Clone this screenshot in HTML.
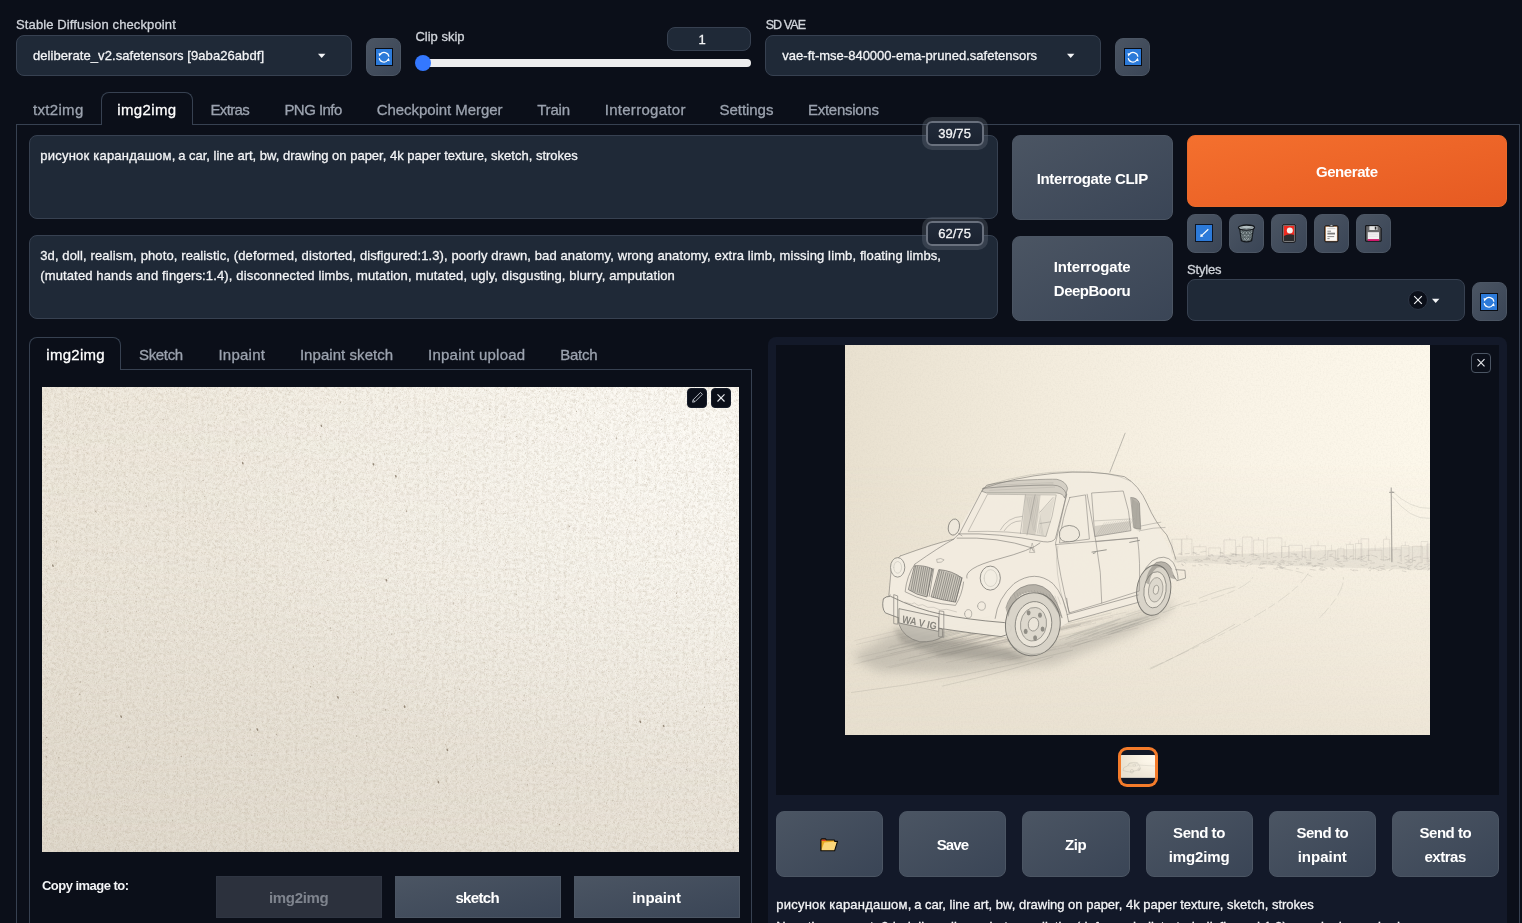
<!DOCTYPE html>
<html lang="en">
<head>
<meta charset="utf-8">
<title>Stable Diffusion</title>
<style>
html,body{margin:0;padding:0;background:#0b0f19;}
html{width:1522px;height:923px;overflow:hidden;}
body{width:1522px;height:923px;overflow:hidden;position:relative;font-family:"Liberation Sans","DejaVu Sans",sans-serif;color:#f3f4f6;}
.a{position:absolute;box-sizing:border-box;}
.t{position:absolute;white-space:nowrap;line-height:20px;height:20px;-webkit-text-stroke:0.3px;}
.tx{position:absolute;left:0;top:0;width:1522px;height:923px;overflow:hidden;will-change:transform;}
.inp{background:#1f2937;border:1px solid #374151;border-radius:8px;}
.btn{background:linear-gradient(to bottom right,#4b5563,#3a4556);border:1px solid #4b5563;border-radius:8px;}
.sq{border-radius:0;}
svg{position:absolute;display:block;overflow:visible;}
</style>
</head>
<body>
<!-- ===== top row ===== -->
<div class="a inp" style="left:16px;top:35px;width:336px;height:41px;"></div>
<svg style="left:317px;top:53px" width="10" height="6" viewBox="0 0 10 6"><path d="M1 0.7h7.4L4.7 4.9z" fill="#f3f4f6"/></svg>
<div class="a btn" style="left:366px;top:38px;width:35px;height:38px;"></div>
<svg style="left:374.5px;top:48px" width="18" height="18" viewBox="0 0 18 18"><rect x="0.5" y="0.5" width="17" height="17" fill="#2c7ad9" stroke="#0a0d14" stroke-width="1"/><path d="M13.9 8.7A4.8 4.8 0 0 0 5.2 6.5M4.2 10.1A4.8 4.8 0 0 0 12.9 12" stroke="#fff" stroke-width="1.15" fill="none"/><path d="M3.5 5.3l3.4 0.2-2.5 3.1zM14.7 13.2l-3.3-0.4 2.4-3z" fill="#fff"/></svg>

<div class="a inp" style="left:667px;top:27px;width:84px;height:24px;"></div>
<div class="a" style="left:415.5px;top:59.2px;width:335px;height:8px;border-radius:4px;background:#ededee;"></div>
<div class="a" style="left:415.3px;top:55.1px;width:15.6px;height:15.6px;border-radius:8px;background:#3478ff;"></div>
<div class="a inp" style="left:765px;top:35px;width:336px;height:41px;"></div>
<svg style="left:1066px;top:53px" width="10" height="6" viewBox="0 0 10 6"><path d="M1 0.7h7.4L4.7 4.9z" fill="#f3f4f6"/></svg>
<div class="a btn" style="left:1115px;top:38px;width:35px;height:38px;"></div>
<svg style="left:1124px;top:48px" width="18" height="18" viewBox="0 0 18 18"><rect x="0.5" y="0.5" width="17" height="17" fill="#2c7ad9" stroke="#0a0d14" stroke-width="1"/><path d="M13.9 8.7A4.8 4.8 0 0 0 5.2 6.5M4.2 10.1A4.8 4.8 0 0 0 12.9 12" stroke="#fff" stroke-width="1.15" fill="none"/><path d="M3.5 5.3l3.4 0.2-2.5 3.1zM14.7 13.2l-3.3-0.4 2.4-3z" fill="#fff"/></svg>


<!-- ===== main tabs ===== -->
<div class="a" style="left:16px;top:124px;width:1504px;height:799px;border:1px solid #374151;border-bottom:none;"></div>
<div class="a" style="left:101px;top:92px;width:92px;height:33px;border:1px solid #374151;border-bottom:none;border-radius:8px 8px 0 0;background:#0b0f19;"></div>

<!-- ===== prompts ===== -->
<div class="a inp" style="left:29px;top:135px;width:969px;height:84px;"></div>
<div class="a inp" style="left:29px;top:235px;width:969px;height:84px;"></div>
<div class="a" style="left:926px;top:121px;width:58px;height:25px;border:2px solid #69707d;border-radius:6px;background:linear-gradient(#212a39,#1b2331);box-shadow:0 0 0 4px rgba(107,114,128,0.32);"></div>
<div class="a" style="left:926px;top:221px;width:58px;height:25px;border:2px solid #69707d;border-radius:6px;background:linear-gradient(#212a39,#1b2331);box-shadow:0 0 0 4px rgba(107,114,128,0.32);"></div>

<div class="a btn" style="left:1012px;top:135px;width:161px;height:85px;"></div>
<div class="a btn" style="left:1012px;top:236px;width:161px;height:85px;"></div>
<div class="a" style="left:1187px;top:135px;width:320px;height:72px;border-radius:8px;background:linear-gradient(to bottom right,#f4702e,#e65a22);border:1px solid #ea6a2a;"></div>

<div class="a btn" style="left:1187px;top:214px;width:35px;height:39px;"></div>
<div class="a btn" style="left:1229px;top:214px;width:35px;height:39px;"></div>
<div class="a btn" style="left:1271px;top:214px;width:36px;height:39px;"></div>
<div class="a btn" style="left:1314px;top:214px;width:35px;height:39px;"></div>
<div class="a btn" style="left:1356px;top:214px;width:35px;height:39px;"></div>
<svg style="left:1195px;top:224px" width="18" height="18" viewBox="0 0 18 18"><rect x="0.5" y="0.5" width="17" height="17" fill="#2c7ad9" stroke="#0d1626" stroke-width="1"/><path d="M13.3 5.2L6.6 11.6" stroke="#fff" stroke-width="1.2" fill="none"/><path d="M5.2 12.9l0.6-3.2 2.6 2.7z" fill="#fff"/></svg>
<svg style="left:1237px;top:224px" width="19" height="19" viewBox="0 0 19 19"><path d="M2.6 3.6L4.4 16.6Q9.5 19 14.6 16.6L16.4 3.6z" fill="#96a1a4" stroke="#14181d" stroke-width="1.3" stroke-linejoin="round"/><path d="M3.4 7.2l12.2 0M3.8 10.2l11.4 0M4.2 13.2l10.6 0M5 6l9 10M8 5.6l6.6 7.6M11 5.6l4 4.6M3.6 8.4l7 8.6M4.2 12.2l4 5M14 6l-9 10M11 5.6l-6.6 7.6M8 5.6l-4 4.6M15.4 8.4l-7 8.6M14.8 12.2l-4 5" stroke="#4f5a5e" stroke-width="0.9" fill="none"/><ellipse cx="9.5" cy="3.6" rx="8" ry="2.6" fill="#b4bfc2" stroke="#14181d" stroke-width="1.3"/><path d="M3.5 3.8Q9.5 6 15.5 3.8" stroke="#6d787c" stroke-width="0.8" fill="none"/></svg>
<svg style="left:1282px;top:224px" width="14" height="19" viewBox="0 0 14 19"><rect x="0.6" y="0.6" width="12.8" height="17.6" rx="1.6" fill="#2b2b2d" stroke="#111113" stroke-width="1"/><path d="M1.7 1.7h10.6v9.3Q7 9.3 1.7 11.9z" fill="#ef2a20"/><circle cx="7.8" cy="6.4" r="3" fill="#f4f2ee"/><rect x="1.3" y="1.3" width="11.4" height="16.2" rx="1.1" fill="none" stroke="#a3a3a3" stroke-width="0.7"/></svg>
<svg style="left:1324px;top:224px" width="15" height="19" viewBox="0 0 15 19"><rect x="0.8" y="1.8" width="13.2" height="16" rx="1" fill="#c99160" stroke="#111113" stroke-width="1"/><rect x="1.9" y="2.9" width="11" height="13.9" fill="#fbfaf8"/><path d="M5.4 2.6Q5.6 0.8 7.4 0.5Q9.2 0.8 9.4 2.6z" fill="#b8bcc0" stroke="#33373b" stroke-width="0.6"/><path d="M3.4 4.6h8" stroke="#c9c9c9" stroke-width="0.9"/><path d="M3.4 7.2h3.6M3.4 12.6h6.8M3.4 14.6h2.2" stroke="#7c7c7c" stroke-width="0.9"/><path d="M3.4 9.6h7.6" stroke="#7c7c7c" stroke-width="1.8"/></svg>
<svg style="left:1365px;top:225px" width="17" height="17" viewBox="0 0 17 17"><path d="M0.7 0.7h12.8l2.6 2.6v12.9H0.7z" fill="#68686a" stroke="#0b0b0d" stroke-width="1" stroke-linejoin="round"/><rect x="4.4" y="1.2" width="8" height="3.8" fill="#e6e6e6"/><rect x="9.8" y="1.6" width="1.6" height="3" fill="#2a2a2c"/><rect x="2.8" y="7.2" width="11.2" height="7.2" fill="#f3f2f3"/><path d="M3.4 9.2h10M3.4 11.2h10" stroke="#dddadd" stroke-width="0.6"/><rect x="2.8" y="14.2" width="11.2" height="1.7" fill="#df1270"/></svg>


<div class="a inp" style="left:1187px;top:279px;width:278px;height:42px;"></div>
<div class="a" style="left:1408px;top:290px;width:20px;height:20px;border-radius:10px;background:#0b0f19;border:1px solid #2b3444;"></div>
<svg style="left:1413px;top:295px" width="10" height="10" viewBox="0 0 10 10"><path d="M1.2 1.2L8.8 8.8M8.8 1.2L1.2 8.8" stroke="#f3f4f6" stroke-width="1.15" fill="none"/></svg>
<svg style="left:1431.2px;top:298px" width="10" height="6" viewBox="0 0 10 6"><path d="M1 0.7h7.4L4.7 4.9z" fill="#f3f4f6"/></svg>
<div class="a btn" style="left:1472px;top:282px;width:35px;height:39px;"></div>
<svg style="left:1480px;top:293px" width="18" height="18" viewBox="0 0 18 18"><rect x="0.5" y="0.5" width="17" height="17" fill="#2c7ad9" stroke="#0a0d14" stroke-width="1"/><path d="M13.9 8.7A4.8 4.8 0 0 0 5.2 6.5M4.2 10.1A4.8 4.8 0 0 0 12.9 12" stroke="#fff" stroke-width="1.15" fill="none"/><path d="M3.5 5.3l3.4 0.2-2.5 3.1zM14.7 13.2l-3.3-0.4 2.4-3z" fill="#fff"/></svg>


<!-- ===== left panel ===== -->
<div class="a" style="left:29px;top:369px;width:723px;height:554px;border:1px solid #374151;border-bottom:none;"></div>
<div class="a" style="left:29px;top:337px;width:92px;height:33px;border:1px solid #374151;border-bottom:none;border-radius:8px 8px 0 0;background:#0b0f19;"></div>
<svg style="left:42px;top:387px" width="697" height="465" viewBox="0 0 697 465">
<defs>
<linearGradient id="pgt" x1="0" y1="0" x2="1" y2="0"><stop offset="0" stop-color="#efe9dd"/><stop offset="1" stop-color="#f9f6ee"/></linearGradient>
<linearGradient id="pgb" x1="0" y1="0" x2="1" y2="0"><stop offset="0" stop-color="#dfd8cb"/><stop offset="1" stop-color="#e9e3d8"/></linearGradient>
<linearGradient id="pgm" x1="0" y1="0" x2="0" y2="1"><stop offset="0" stop-color="#000"/><stop offset="0.4" stop-color="#333"/><stop offset="0.75" stop-color="#bbb"/><stop offset="1" stop-color="#fff"/></linearGradient>
<radialGradient id="phl" cx="0.95" cy="0.1" r="0.75"><stop offset="0" stop-color="#fffdf8" stop-opacity="0.75"/><stop offset="0.5" stop-color="#fffdf8" stop-opacity="0.3"/><stop offset="1" stop-color="#fffdf8" stop-opacity="0"/></radialGradient>
<mask id="pmk"><rect width="697" height="465" fill="url(#pgm)"/></mask>
<filter id="pn" x="0" y="0" width="100%" height="100%"><feTurbulence type="fractalNoise" baseFrequency="0.32" numOctaves="3" seed="3"/><feColorMatrix type="matrix" values="0 0 0 0 0.42  0 0 0 0 0.35  0 0 0 0 0.26  0.7 0.7 0.7 0 -0.92"/></filter>
<filter id="pf" x="0" y="0" width="100%" height="100%"><feTurbulence type="fractalNoise" baseFrequency="0.9" numOctaves="1" seed="21"/><feColorMatrix type="matrix" values="0 0 0 0 0.40  0 0 0 0 0.33  0 0 0 0 0.24  1.1 1.1 1.1 0 -1.68"/></filter>
<filter id="pl" x="0" y="0" width="100%" height="100%"><feTurbulence type="fractalNoise" baseFrequency="0.45" numOctaves="2" seed="9"/><feColorMatrix type="matrix" values="0 0 0 0 1  0 0 0 0 1  0 0 0 0 0.98  0.7 0.7 0.7 0 -0.95"/></filter>
</defs>
<rect width="697" height="465" fill="url(#pgt)"/>
<rect width="697" height="465" fill="url(#pgb)" mask="url(#pmk)"/>
<rect width="697" height="465" fill="url(#phl)"/>
<rect width="697" height="465" filter="url(#pn)" opacity="0.42"/>
<rect width="697" height="465" filter="url(#pf)" opacity="0.5"/>
<rect width="697" height="465" filter="url(#pl)" opacity="0.22"/>
<ellipse cx="226.4" cy="71.5" rx="0.7" ry="1.02" fill="#6b5a45" opacity="0.16"/><ellipse cx="67.2" cy="270.7" rx="0.6" ry="0.52" fill="#6b5a45" opacity="0.21"/><ellipse cx="291.8" cy="112.9" rx="0.6" ry="0.88" fill="#6b5a45" opacity="0.26"/><ellipse cx="87.8" cy="104.9" rx="0.7" ry="0.59" fill="#6b5a45" opacity="0.31"/><ellipse cx="407.8" cy="24.9" rx="0.45" ry="0.67" fill="#6b5a45" opacity="0.16"/><ellipse cx="202.7" cy="68.5" rx="0.4" ry="0.50" fill="#6b5a45" opacity="0.30"/><ellipse cx="474.6" cy="49.5" rx="0.6" ry="0.66" fill="#6b5a45" opacity="0.32"/><ellipse cx="381.6" cy="30.9" rx="0.4" ry="0.48" fill="#6b5a45" opacity="0.32"/><ellipse cx="370.5" cy="360.3" rx="0.55" ry="0.64" fill="#6b5a45" opacity="0.31"/><ellipse cx="209.7" cy="368.2" rx="0.7" ry="0.61" fill="#6b5a45" opacity="0.36"/><ellipse cx="210.1" cy="230.2" rx="0.5" ry="0.52" fill="#6b5a45" opacity="0.35"/><ellipse cx="681.3" cy="56.4" rx="0.55" ry="0.59" fill="#6b5a45" opacity="0.19"/><ellipse cx="648.8" cy="196.4" rx="0.7" ry="0.87" fill="#6b5a45" opacity="0.17"/><ellipse cx="548.8" cy="379.3" rx="0.5" ry="0.64" fill="#6b5a45" opacity="0.34"/><ellipse cx="403.9" cy="212.3" rx="0.4" ry="0.47" fill="#6b5a45" opacity="0.41"/><ellipse cx="462.3" cy="30.0" rx="0.7" ry="0.88" fill="#6b5a45" opacity="0.23"/><ellipse cx="474.1" cy="207.4" rx="0.7" ry="0.93" fill="#6b5a45" opacity="0.25"/><ellipse cx="17.6" cy="214.8" rx="0.45" ry="0.54" fill="#6b5a45" opacity="0.31"/><ellipse cx="153.2" cy="134.5" rx="0.7" ry="0.78" fill="#6b5a45" opacity="0.22"/><ellipse cx="605.9" cy="39.1" rx="0.55" ry="0.56" fill="#6b5a45" opacity="0.26"/><ellipse cx="96.9" cy="200.5" rx="0.6" ry="0.68" fill="#6b5a45" opacity="0.23"/><ellipse cx="250.6" cy="409.6" rx="0.45" ry="0.42" fill="#6b5a45" opacity="0.19"/><ellipse cx="162.7" cy="109.6" rx="0.55" ry="0.52" fill="#6b5a45" opacity="0.37"/><ellipse cx="197.4" cy="69.2" rx="0.6" ry="0.75" fill="#6b5a45" opacity="0.25"/><ellipse cx="662.5" cy="320.3" rx="0.6" ry="0.79" fill="#6b5a45" opacity="0.41"/><ellipse cx="514.7" cy="212.5" rx="0.7" ry="0.78" fill="#6b5a45" opacity="0.37"/><ellipse cx="278.5" cy="49.7" rx="0.7" ry="0.67" fill="#6b5a45" opacity="0.26"/><ellipse cx="684.4" cy="205.1" rx="0.4" ry="0.34" fill="#6b5a45" opacity="0.24"/><ellipse cx="2.2" cy="71.7" rx="0.4" ry="0.52" fill="#6b5a45" opacity="0.41"/><ellipse cx="50.7" cy="97.9" rx="0.55" ry="0.55" fill="#6b5a45" opacity="0.19"/><ellipse cx="242.7" cy="169.9" rx="0.4" ry="0.48" fill="#6b5a45" opacity="0.18"/><ellipse cx="679.6" cy="223.5" rx="0.5" ry="0.44" fill="#6b5a45" opacity="0.17"/><ellipse cx="239.4" cy="124.1" rx="0.7" ry="0.57" fill="#6b5a45" opacity="0.19"/><ellipse cx="661.0" cy="245.5" rx="0.45" ry="0.69" fill="#6b5a45" opacity="0.34"/><ellipse cx="527.4" cy="139.4" rx="0.7" ry="0.95" fill="#6b5a45" opacity="0.38"/><ellipse cx="183.0" cy="171.0" rx="0.45" ry="0.44" fill="#6b5a45" opacity="0.25"/><ellipse cx="377.3" cy="233.7" rx="0.7" ry="1.01" fill="#6b5a45" opacity="0.21"/><ellipse cx="684.6" cy="395.1" rx="0.45" ry="0.63" fill="#6b5a45" opacity="0.37"/><ellipse cx="159.1" cy="240.6" rx="0.5" ry="0.80" fill="#6b5a45" opacity="0.35"/><ellipse cx="549.5" cy="219.7" rx="0.45" ry="0.70" fill="#6b5a45" opacity="0.34"/><ellipse cx="311.9" cy="434.0" rx="0.5" ry="0.55" fill="#6b5a45" opacity="0.41"/><ellipse cx="154.8" cy="106.6" rx="0.45" ry="0.53" fill="#6b5a45" opacity="0.24"/><ellipse cx="684.8" cy="283.3" rx="0.4" ry="0.53" fill="#6b5a45" opacity="0.28"/><ellipse cx="556.2" cy="41.1" rx="0.7" ry="0.78" fill="#6b5a45" opacity="0.18"/><ellipse cx="495.1" cy="93.9" rx="0.45" ry="0.59" fill="#6b5a45" opacity="0.27"/><ellipse cx="62.1" cy="438.2" rx="0.7" ry="0.78" fill="#6b5a45" opacity="0.26"/><ellipse cx="658.1" cy="336.1" rx="0.45" ry="0.37" fill="#6b5a45" opacity="0.42"/><ellipse cx="411.4" cy="216.5" rx="0.7" ry="1.02" fill="#6b5a45" opacity="0.19"/><ellipse cx="681.4" cy="305.0" rx="0.5" ry="0.62" fill="#6b5a45" opacity="0.19"/><ellipse cx="16.8" cy="370.5" rx="0.7" ry="0.85" fill="#6b5a45" opacity="0.33"/><ellipse cx="649.0" cy="202.0" rx="0.45" ry="0.44" fill="#6b5a45" opacity="0.37"/><ellipse cx="176.5" cy="137.1" rx="0.45" ry="0.48" fill="#6b5a45" opacity="0.36"/><ellipse cx="379.2" cy="386.6" rx="0.4" ry="0.43" fill="#6b5a45" opacity="0.40"/><ellipse cx="319.5" cy="270.9" rx="0.6" ry="0.92" fill="#6b5a45" opacity="0.26"/><ellipse cx="349.6" cy="247.2" rx="0.6" ry="0.90" fill="#6b5a45" opacity="0.29"/><ellipse cx="540.1" cy="282.5" rx="0.45" ry="0.53" fill="#6b5a45" opacity="0.20"/><ellipse cx="504.6" cy="258.5" rx="0.5" ry="0.61" fill="#6b5a45" opacity="0.33"/><ellipse cx="336.4" cy="360.0" rx="0.6" ry="0.57" fill="#6b5a45" opacity="0.17"/><ellipse cx="31.2" cy="47.1" rx="0.55" ry="0.77" fill="#6b5a45" opacity="0.30"/><ellipse cx="634.4" cy="206.3" rx="0.6" ry="0.77" fill="#6b5a45" opacity="0.41"/><ellipse cx="140.2" cy="129.8" rx="0.6" ry="0.71" fill="#6b5a45" opacity="0.29"/><ellipse cx="654.5" cy="324.3" rx="0.5" ry="0.76" fill="#6b5a45" opacity="0.40"/><ellipse cx="142.4" cy="208.3" rx="0.55" ry="0.63" fill="#6b5a45" opacity="0.18"/><ellipse cx="52.3" cy="112.9" rx="0.4" ry="0.42" fill="#6b5a45" opacity="0.21"/><ellipse cx="86.8" cy="360.2" rx="0.7" ry="0.77" fill="#6b5a45" opacity="0.32"/><ellipse cx="177.4" cy="65.3" rx="0.55" ry="0.86" fill="#6b5a45" opacity="0.21"/><ellipse cx="278.0" cy="226.6" rx="0.7" ry="0.65" fill="#6b5a45" opacity="0.37"/><ellipse cx="301.0" cy="239.7" rx="0.5" ry="0.54" fill="#6b5a45" opacity="0.26"/><ellipse cx="65.9" cy="170.7" rx="0.5" ry="0.58" fill="#6b5a45" opacity="0.30"/><ellipse cx="14.5" cy="154.8" rx="0.6" ry="0.94" fill="#6b5a45" opacity="0.23"/><ellipse cx="80.2" cy="425.5" rx="0.45" ry="0.40" fill="#6b5a45" opacity="0.41"/><ellipse cx="186.0" cy="20.3" rx="0.45" ry="0.41" fill="#6b5a45" opacity="0.22"/><ellipse cx="294.6" cy="422.2" rx="0.5" ry="0.61" fill="#6b5a45" opacity="0.26"/><ellipse cx="358.7" cy="230.0" rx="0.5" ry="0.42" fill="#6b5a45" opacity="0.17"/><ellipse cx="478.9" cy="198.1" rx="0.4" ry="0.33" fill="#6b5a45" opacity="0.22"/><ellipse cx="63.4" cy="122.1" rx="0.6" ry="0.51" fill="#6b5a45" opacity="0.38"/><ellipse cx="599.9" cy="211.2" rx="0.5" ry="0.57" fill="#6b5a45" opacity="0.42"/><ellipse cx="636.4" cy="288.6" rx="0.4" ry="0.40" fill="#6b5a45" opacity="0.29"/><ellipse cx="77.8" cy="76.4" rx="0.4" ry="0.62" fill="#6b5a45" opacity="0.20"/><ellipse cx="437.7" cy="246.8" rx="0.45" ry="0.54" fill="#6b5a45" opacity="0.23"/><ellipse cx="125.3" cy="162.0" rx="0.4" ry="0.33" fill="#6b5a45" opacity="0.42"/><ellipse cx="14.8" cy="235.1" rx="0.45" ry="0.45" fill="#6b5a45" opacity="0.29"/><ellipse cx="311.8" cy="305.5" rx="0.7" ry="0.84" fill="#6b5a45" opacity="0.27"/><ellipse cx="580.4" cy="183.2" rx="0.6" ry="0.58" fill="#6b5a45" opacity="0.23"/><ellipse cx="161.1" cy="93.6" rx="0.7" ry="0.64" fill="#6b5a45" opacity="0.35"/><ellipse cx="687.7" cy="454.6" rx="0.45" ry="0.59" fill="#6b5a45" opacity="0.15"/><ellipse cx="611.7" cy="200.6" rx="0.4" ry="0.59" fill="#6b5a45" opacity="0.17"/><ellipse cx="605.3" cy="311.1" rx="0.5" ry="0.68" fill="#6b5a45" opacity="0.31"/><ellipse cx="33.3" cy="87.4" rx="0.5" ry="0.51" fill="#6b5a45" opacity="0.27"/><ellipse cx="668.5" cy="450.4" rx="0.6" ry="0.50" fill="#6b5a45" opacity="0.24"/><ellipse cx="613.5" cy="102.4" rx="0.45" ry="0.50" fill="#6b5a45" opacity="0.15"/><ellipse cx="330.9" cy="233.8" rx="0.45" ry="0.64" fill="#6b5a45" opacity="0.22"/><ellipse cx="65.0" cy="378.7" rx="0.45" ry="0.38" fill="#6b5a45" opacity="0.26"/><ellipse cx="17.6" cy="142.3" rx="0.45" ry="0.70" fill="#6b5a45" opacity="0.17"/><ellipse cx="593.3" cy="73.6" rx="0.7" ry="0.89" fill="#6b5a45" opacity="0.36"/><ellipse cx="531.7" cy="334.2" rx="0.55" ry="0.76" fill="#6b5a45" opacity="0.19"/><ellipse cx="447.8" cy="22.2" rx="0.7" ry="0.91" fill="#6b5a45" opacity="0.39"/><ellipse cx="510.6" cy="376.4" rx="0.45" ry="0.63" fill="#6b5a45" opacity="0.40"/><ellipse cx="396.0" cy="376.7" rx="0.4" ry="0.51" fill="#6b5a45" opacity="0.37"/><ellipse cx="620.7" cy="316.8" rx="0.7" ry="0.61" fill="#6b5a45" opacity="0.32"/><ellipse cx="31.0" cy="295.7" rx="0.4" ry="0.46" fill="#6b5a45" opacity="0.25"/><ellipse cx="37.2" cy="10.7" rx="0.6" ry="0.71" fill="#6b5a45" opacity="0.33"/><ellipse cx="4.3" cy="369.7" rx="0.7" ry="1.06" fill="#6b5a45" opacity="0.40"/><ellipse cx="65.7" cy="244.5" rx="0.7" ry="0.70" fill="#6b5a45" opacity="0.35"/><ellipse cx="53.6" cy="124.4" rx="0.7" ry="0.69" fill="#6b5a45" opacity="0.35"/><ellipse cx="452.4" cy="214.2" rx="0.55" ry="0.84" fill="#6b5a45" opacity="0.17"/><ellipse cx="201.1" cy="23.6" rx="0.7" ry="0.60" fill="#6b5a45" opacity="0.32"/><ellipse cx="104.2" cy="119.1" rx="0.7" ry="0.91" fill="#6b5a45" opacity="0.34"/><ellipse cx="94.5" cy="224.4" rx="0.55" ry="0.74" fill="#6b5a45" opacity="0.22"/><ellipse cx="481.7" cy="313.5" rx="0.5" ry="0.51" fill="#6b5a45" opacity="0.34"/><ellipse cx="324.9" cy="355.7" rx="0.6" ry="0.95" fill="#6b5a45" opacity="0.20"/><ellipse cx="650.8" cy="10.1" rx="0.55" ry="0.66" fill="#6b5a45" opacity="0.17"/><ellipse cx="691.3" cy="460.2" rx="0.55" ry="0.86" fill="#6b5a45" opacity="0.21"/><ellipse cx="148.0" cy="270.1" rx="0.45" ry="0.45" fill="#6b5a45" opacity="0.35"/><ellipse cx="251.2" cy="280.2" rx="0.7" ry="1.06" fill="#6b5a45" opacity="0.29"/><ellipse cx="489.4" cy="108.7" rx="0.55" ry="0.51" fill="#6b5a45" opacity="0.26"/><ellipse cx="660.3" cy="316.2" rx="0.55" ry="0.50" fill="#6b5a45" opacity="0.23"/><ellipse cx="240.4" cy="147.7" rx="0.5" ry="0.70" fill="#6b5a45" opacity="0.15"/><ellipse cx="583.5" cy="57.3" rx="0.45" ry="0.68" fill="#6b5a45" opacity="0.34"/><ellipse cx="202.9" cy="173.6" rx="0.55" ry="0.82" fill="#6b5a45" opacity="0.26"/><ellipse cx="54.9" cy="428.6" rx="0.5" ry="0.51" fill="#6b5a45" opacity="0.38"/><ellipse cx="37.8" cy="307.2" rx="0.7" ry="0.70" fill="#6b5a45" opacity="0.40"/><ellipse cx="186.1" cy="237.6" rx="0.45" ry="0.64" fill="#6b5a45" opacity="0.36"/><ellipse cx="298.4" cy="15.4" rx="0.7" ry="1.05" fill="#6b5a45" opacity="0.26"/><ellipse cx="386.0" cy="95.8" rx="0.4" ry="0.55" fill="#6b5a45" opacity="0.16"/><ellipse cx="314.4" cy="349.0" rx="0.7" ry="0.83" fill="#6b5a45" opacity="0.38"/><ellipse cx="634.0" cy="255.6" rx="0.45" ry="0.48" fill="#6b5a45" opacity="0.28"/><ellipse cx="208.4" cy="342.7" rx="0.7" ry="0.93" fill="#6b5a45" opacity="0.22"/><ellipse cx="210.5" cy="258.9" rx="0.55" ry="0.72" fill="#6b5a45" opacity="0.18"/><ellipse cx="54.1" cy="232.8" rx="0.55" ry="0.64" fill="#6b5a45" opacity="0.30"/><ellipse cx="232.7" cy="352.0" rx="0.55" ry="0.52" fill="#6b5a45" opacity="0.19"/><ellipse cx="64.9" cy="159.6" rx="0.4" ry="0.44" fill="#6b5a45" opacity="0.24"/><ellipse cx="562.9" cy="95.2" rx="0.4" ry="0.45" fill="#6b5a45" opacity="0.35"/><ellipse cx="288.8" cy="243.6" rx="0.55" ry="0.77" fill="#6b5a45" opacity="0.22"/><ellipse cx="347.2" cy="266.7" rx="0.5" ry="0.60" fill="#6b5a45" opacity="0.18"/><ellipse cx="438.3" cy="399.8" rx="0.45" ry="0.68" fill="#6b5a45" opacity="0.18"/><ellipse cx="268.5" cy="299.7" rx="0.55" ry="0.81" fill="#6b5a45" opacity="0.41"/><ellipse cx="606.9" cy="12.1" rx="0.4" ry="0.56" fill="#6b5a45" opacity="0.26"/><ellipse cx="559.3" cy="448.4" rx="0.55" ry="0.61" fill="#6b5a45" opacity="0.15"/><ellipse cx="644.3" cy="382.6" rx="0.55" ry="0.55" fill="#6b5a45" opacity="0.41"/><ellipse cx="77.6" cy="73.2" rx="0.6" ry="0.53" fill="#6b5a45" opacity="0.41"/><ellipse cx="574.0" cy="325.2" rx="0.55" ry="0.78" fill="#6b5a45" opacity="0.17"/><ellipse cx="2.9" cy="59.9" rx="0.6" ry="0.79" fill="#6b5a45" opacity="0.40"/><ellipse cx="212.5" cy="61.0" rx="0.5" ry="0.57" fill="#6b5a45" opacity="0.29"/><ellipse cx="531.3" cy="47.8" rx="0.5" ry="0.63" fill="#6b5a45" opacity="0.29"/><ellipse cx="270.9" cy="105.1" rx="0.6" ry="0.74" fill="#6b5a45" opacity="0.15"/><ellipse cx="692.5" cy="130.4" rx="0.5" ry="0.75" fill="#6b5a45" opacity="0.32"/><ellipse cx="331.4" cy="110.2" rx="0.45" ry="0.51" fill="#6b5a45" opacity="0.16"/><ellipse cx="452.2" cy="27.5" rx="0.45" ry="0.60" fill="#6b5a45" opacity="0.28"/><ellipse cx="293.1" cy="120.6" rx="0.7" ry="0.77" fill="#6b5a45" opacity="0.26"/><ellipse cx="343.6" cy="322.8" rx="0.7" ry="0.94" fill="#6b5a45" opacity="0.26"/><ellipse cx="139.3" cy="369.4" rx="0.7" ry="0.60" fill="#6b5a45" opacity="0.38"/><ellipse cx="345.5" cy="94.4" rx="0.45" ry="0.44" fill="#6b5a45" opacity="0.21"/><ellipse cx="529.0" cy="138.0" rx="0.6" ry="0.57" fill="#6b5a45" opacity="0.28"/><ellipse cx="156.8" cy="194.3" rx="0.7" ry="0.89" fill="#6b5a45" opacity="0.17"/><ellipse cx="640.9" cy="27.1" rx="0.4" ry="0.37" fill="#6b5a45" opacity="0.41"/><ellipse cx="37.9" cy="29.7" rx="0.55" ry="0.75" fill="#6b5a45" opacity="0.27"/><ellipse cx="219.7" cy="54.2" rx="0.4" ry="0.43" fill="#6b5a45" opacity="0.40"/><ellipse cx="130.6" cy="433.4" rx="0.7" ry="0.73" fill="#6b5a45" opacity="0.28"/><ellipse cx="504.7" cy="388.8" rx="0.5" ry="0.44" fill="#6b5a45" opacity="0.27"/><ellipse cx="56.2" cy="39.2" rx="0.55" ry="0.49" fill="#6b5a45" opacity="0.41"/><ellipse cx="670.2" cy="97.6" rx="0.5" ry="0.52" fill="#6b5a45" opacity="0.36"/><ellipse cx="559.1" cy="42.5" rx="0.7" ry="0.77" fill="#6b5a45" opacity="0.28"/><ellipse cx="639.2" cy="91.0" rx="0.5" ry="0.59" fill="#6b5a45" opacity="0.35"/><ellipse cx="439.7" cy="116.3" rx="0.7" ry="0.58" fill="#6b5a45" opacity="0.36"/><ellipse cx="26.2" cy="30.8" rx="0.4" ry="0.56" fill="#6b5a45" opacity="0.22"/><ellipse cx="624.7" cy="158.3" rx="0.5" ry="0.78" fill="#6b5a45" opacity="0.24"/><ellipse cx="32.2" cy="346.1" rx="0.7" ry="0.71" fill="#6b5a45" opacity="0.24"/><ellipse cx="4.6" cy="350.4" rx="0.7" ry="0.60" fill="#6b5a45" opacity="0.41"/><ellipse cx="574.4" cy="51.4" rx="0.7" ry="1.09" fill="#6b5a45" opacity="0.41"/><ellipse cx="269.9" cy="117.7" rx="0.55" ry="0.50" fill="#6b5a45" opacity="0.37"/><ellipse cx="346.1" cy="6.0" rx="0.7" ry="0.95" fill="#6b5a45" opacity="0.23"/><ellipse cx="106.9" cy="110.9" rx="0.5" ry="0.71" fill="#6b5a45" opacity="0.27"/><ellipse cx="414.8" cy="238.0" rx="0.55" ry="0.55" fill="#6b5a45" opacity="0.35"/><ellipse cx="46.9" cy="17.6" rx="0.6" ry="0.56" fill="#6b5a45" opacity="0.30"/><ellipse cx="297.6" cy="50.5" rx="0.4" ry="0.35" fill="#6b5a45" opacity="0.22"/><ellipse cx="68.8" cy="231.8" rx="0.7" ry="0.66" fill="#6b5a45" opacity="0.41"/><ellipse cx="94.1" cy="214.5" rx="0.7" ry="0.86" fill="#6b5a45" opacity="0.21"/><ellipse cx="538.3" cy="352.2" rx="0.5" ry="0.63" fill="#6b5a45" opacity="0.23"/><ellipse cx="260.5" cy="342.2" rx="0.45" ry="0.43" fill="#6b5a45" opacity="0.27"/><ellipse cx="165.2" cy="131.7" rx="0.6" ry="0.51" fill="#6b5a45" opacity="0.20"/><ellipse cx="176.4" cy="115.4" rx="0.6" ry="0.87" fill="#6b5a45" opacity="0.21"/><ellipse cx="454.8" cy="458.8" rx="0.4" ry="0.60" fill="#6b5a45" opacity="0.15"/><ellipse cx="162.2" cy="208.7" rx="0.5" ry="0.52" fill="#6b5a45" opacity="0.16"/><ellipse cx="84.6" cy="89.4" rx="0.6" ry="0.52" fill="#6b5a45" opacity="0.20"/><ellipse cx="357.3" cy="83.9" rx="0.6" ry="0.85" fill="#6b5a45" opacity="0.22"/><ellipse cx="657.4" cy="50.8" rx="0.6" ry="0.65" fill="#6b5a45" opacity="0.34"/><ellipse cx="28.0" cy="158.7" rx="0.4" ry="0.40" fill="#6b5a45" opacity="0.21"/><ellipse cx="417.4" cy="302.4" rx="0.45" ry="0.65" fill="#6b5a45" opacity="0.37"/><ellipse cx="285.4" cy="173.4" rx="0.6" ry="0.58" fill="#6b5a45" opacity="0.23"/><ellipse cx="553.1" cy="254.6" rx="0.4" ry="0.57" fill="#6b5a45" opacity="0.26"/><ellipse cx="462.2" cy="73.2" rx="0.6" ry="0.56" fill="#6b5a45" opacity="0.17"/><ellipse cx="483.9" cy="190.9" rx="0.5" ry="0.57" fill="#6b5a45" opacity="0.33"/><ellipse cx="37.6" cy="345.6" rx="0.5" ry="0.41" fill="#6b5a45" opacity="0.26"/><ellipse cx="533.3" cy="371.8" rx="0.7" ry="0.97" fill="#6b5a45" opacity="0.20"/><ellipse cx="143.1" cy="4.7" rx="0.45" ry="0.66" fill="#6b5a45" opacity="0.26"/><ellipse cx="283.5" cy="409.0" rx="0.55" ry="0.50" fill="#6b5a45" opacity="0.36"/><ellipse cx="37.8" cy="67.7" rx="0.55" ry="0.71" fill="#6b5a45" opacity="0.17"/><ellipse cx="259.0" cy="234.6" rx="0.45" ry="0.42" fill="#6b5a45" opacity="0.24"/><ellipse cx="121.0" cy="32.9" rx="0.55" ry="0.79" fill="#6b5a45" opacity="0.28"/><ellipse cx="672.0" cy="93.0" rx="0.45" ry="0.38" fill="#6b5a45" opacity="0.38"/><ellipse cx="634.6" cy="147.0" rx="0.6" ry="0.67" fill="#6b5a45" opacity="0.40"/><ellipse cx="628.6" cy="288.0" rx="0.45" ry="0.67" fill="#6b5a45" opacity="0.32"/><ellipse cx="432.4" cy="285.4" rx="0.45" ry="0.43" fill="#6b5a45" opacity="0.37"/><ellipse cx="153.2" cy="186.3" rx="0.6" ry="0.65" fill="#6b5a45" opacity="0.19"/><ellipse cx="105.6" cy="449.5" rx="0.45" ry="0.56" fill="#6b5a45" opacity="0.16"/><ellipse cx="526.9" cy="19.6" rx="0.5" ry="0.64" fill="#6b5a45" opacity="0.18"/><ellipse cx="383.2" cy="291.1" rx="0.5" ry="0.52" fill="#6b5a45" opacity="0.33"/><ellipse cx="174.7" cy="181.4" rx="0.5" ry="0.58" fill="#6b5a45" opacity="0.27"/><ellipse cx="18.2" cy="287.3" rx="0.55" ry="0.64" fill="#6b5a45" opacity="0.28"/><ellipse cx="430.7" cy="379.5" rx="0.45" ry="0.50" fill="#6b5a45" opacity="0.37"/><ellipse cx="48.5" cy="167.3" rx="0.5" ry="0.58" fill="#6b5a45" opacity="0.17"/><ellipse cx="355.5" cy="20.8" rx="0.7" ry="1.08" fill="#6b5a45" opacity="0.19"/><ellipse cx="219.4" cy="334.1" rx="0.4" ry="0.48" fill="#6b5a45" opacity="0.16"/><ellipse cx="263.9" cy="440.4" rx="0.45" ry="0.38" fill="#6b5a45" opacity="0.16"/><ellipse cx="427.6" cy="321.3" rx="0.4" ry="0.63" fill="#6b5a45" opacity="0.20"/><ellipse cx="342.9" cy="443.0" rx="0.45" ry="0.62" fill="#6b5a45" opacity="0.34"/><ellipse cx="155.2" cy="386.0" rx="0.6" ry="0.56" fill="#6b5a45" opacity="0.35"/><ellipse cx="623.3" cy="128.8" rx="0.55" ry="0.66" fill="#6b5a45" opacity="0.19"/><ellipse cx="639.5" cy="98.0" rx="0.5" ry="0.49" fill="#6b5a45" opacity="0.32"/><ellipse cx="260.0" cy="93.7" rx="0.55" ry="0.85" fill="#6b5a45" opacity="0.19"/><ellipse cx="473.0" cy="414.8" rx="0.45" ry="0.46" fill="#6b5a45" opacity="0.36"/><ellipse cx="534.4" cy="24.4" rx="0.5" ry="0.58" fill="#6b5a45" opacity="0.41"/><ellipse cx="363.4" cy="319.5" rx="0.4" ry="0.49" fill="#6b5a45" opacity="0.22"/><ellipse cx="595.6" cy="342.2" rx="0.5" ry="0.80" fill="#6b5a45" opacity="0.22"/><ellipse cx="402.1" cy="168.1" rx="0.4" ry="0.38" fill="#6b5a45" opacity="0.27"/><ellipse cx="517.3" cy="24.3" rx="0.6" ry="0.79" fill="#6b5a45" opacity="0.22"/><ellipse cx="684.0" cy="272.1" rx="0.7" ry="0.97" fill="#6b5a45" opacity="0.39"/><ellipse cx="519.8" cy="104.2" rx="0.5" ry="0.57" fill="#6b5a45" opacity="0.32"/><ellipse cx="357.3" cy="414.8" rx="0.45" ry="0.58" fill="#6b5a45" opacity="0.28"/><ellipse cx="33.6" cy="27.1" rx="0.6" ry="0.53" fill="#6b5a45" opacity="0.25"/><ellipse cx="249.5" cy="105.4" rx="0.6" ry="0.54" fill="#6b5a45" opacity="0.23"/><ellipse cx="255.8" cy="383.9" rx="0.45" ry="0.70" fill="#6b5a45" opacity="0.19"/><ellipse cx="170.8" cy="70.8" rx="0.4" ry="0.37" fill="#6b5a45" opacity="0.17"/><ellipse cx="463.2" cy="126.4" rx="0.5" ry="0.42" fill="#6b5a45" opacity="0.41"/><ellipse cx="570.9" cy="413.5" rx="0.6" ry="0.69" fill="#6b5a45" opacity="0.32"/><ellipse cx="651.4" cy="340.2" rx="0.45" ry="0.36" fill="#6b5a45" opacity="0.19"/><ellipse cx="44.6" cy="13.6" rx="0.45" ry="0.38" fill="#6b5a45" opacity="0.21"/><ellipse cx="541.8" cy="7.7" rx="0.6" ry="0.57" fill="#6b5a45" opacity="0.33"/><ellipse cx="288.3" cy="240.9" rx="0.7" ry="0.92" fill="#6b5a45" opacity="0.29"/><ellipse cx="565.7" cy="82.5" rx="0.5" ry="0.65" fill="#6b5a45" opacity="0.17"/><ellipse cx="690.9" cy="335.9" rx="0.55" ry="0.44" fill="#6b5a45" opacity="0.34"/><ellipse cx="587.2" cy="345.5" rx="0.55" ry="0.73" fill="#6b5a45" opacity="0.17"/><ellipse cx="123.5" cy="461.4" rx="0.5" ry="0.42" fill="#6b5a45" opacity="0.21"/><ellipse cx="234.5" cy="347.6" rx="0.7" ry="0.71" fill="#6b5a45" opacity="0.40"/><ellipse cx="38.4" cy="295.1" rx="0.7" ry="1.00" fill="#6b5a45" opacity="0.27"/><ellipse cx="364.6" cy="124.3" rx="0.7" ry="1.06" fill="#6b5a45" opacity="0.40"/><ellipse cx="61.2" cy="235.9" rx="0.45" ry="0.44" fill="#6b5a45" opacity="0.22"/><ellipse cx="517.5" cy="437.5" rx="0.7" ry="0.67" fill="#6b5a45" opacity="0.40"/><ellipse cx="271.4" cy="279.2" rx="0.55" ry="0.72" fill="#6b5a45" opacity="0.40"/><ellipse cx="482.1" cy="308.7" rx="0.6" ry="0.88" fill="#6b5a45" opacity="0.28"/><ellipse cx="485.4" cy="397.3" rx="0.55" ry="0.54" fill="#6b5a45" opacity="0.41"/><ellipse cx="615.1" cy="365.8" rx="0.55" ry="0.47" fill="#6b5a45" opacity="0.32"/><ellipse cx="633.2" cy="68.7" rx="0.4" ry="0.52" fill="#6b5a45" opacity="0.18"/><ellipse cx="114.1" cy="452.6" rx="0.7" ry="0.58" fill="#6b5a45" opacity="0.16"/><ellipse cx="482.0" cy="294.2" rx="0.7" ry="0.59" fill="#6b5a45" opacity="0.17"/><ellipse cx="595.6" cy="353.2" rx="0.45" ry="0.66" fill="#6b5a45" opacity="0.37"/><ellipse cx="619.7" cy="32.4" rx="0.7" ry="0.62" fill="#6b5a45" opacity="0.40"/><ellipse cx="144.6" cy="53.6" rx="0.4" ry="0.61" fill="#6b5a45" opacity="0.41"/><ellipse cx="524.4" cy="42.3" rx="0.7" ry="0.83" fill="#6b5a45" opacity="0.32"/><ellipse cx="331.4" cy="77.3" rx="0.8" ry="1.4" fill="#5e4c38" opacity="0.6" transform="rotate(-20 331.4 77.3)"/><ellipse cx="353.8" cy="89.3" rx="0.8" ry="1.4" fill="#5e4c38" opacity="0.6" transform="rotate(-20 353.8 89.3)"/><ellipse cx="344.4" cy="193.3" rx="0.8" ry="1.4" fill="#5e4c38" opacity="0.6" transform="rotate(-20 344.4 193.3)"/><ellipse cx="296.0" cy="310.4" rx="0.8" ry="1.4" fill="#5e4c38" opacity="0.6" transform="rotate(-20 296.0 310.4)"/><ellipse cx="215.4" cy="342.6" rx="0.8" ry="1.4" fill="#5e4c38" opacity="0.6" transform="rotate(-20 215.4 342.6)"/><ellipse cx="362.6" cy="319.7" rx="0.8" ry="1.4" fill="#5e4c38" opacity="0.6" transform="rotate(-20 362.6 319.7)"/><ellipse cx="396.4" cy="395.2" rx="0.8" ry="1.4" fill="#5e4c38" opacity="0.6" transform="rotate(-20 396.4 395.2)"/><ellipse cx="598.3" cy="334.8" rx="0.8" ry="1.4" fill="#5e4c38" opacity="0.6" transform="rotate(-20 598.3 334.8)"/><ellipse cx="405.3" cy="362.9" rx="0.8" ry="1.4" fill="#5e4c38" opacity="0.6" transform="rotate(-20 405.3 362.9)"/><ellipse cx="621.7" cy="339.0" rx="0.8" ry="1.4" fill="#5e4c38" opacity="0.6" transform="rotate(-20 621.7 339.0)"/><ellipse cx="200.8" cy="76.2" rx="0.8" ry="1.4" fill="#5e4c38" opacity="0.6" transform="rotate(-20 200.8 76.2)"/><ellipse cx="279.4" cy="38.8" rx="0.8" ry="1.4" fill="#5e4c38" opacity="0.6" transform="rotate(-20 279.4 38.8)"/><ellipse cx="10.9" cy="178.7" rx="0.8" ry="1.4" fill="#5e4c38" opacity="0.6" transform="rotate(-20 10.9 178.7)"/><ellipse cx="79.1" cy="329.6" rx="0.8" ry="1.4" fill="#5e4c38" opacity="0.6" transform="rotate(-20 79.1 329.6)"/>
</svg>
<div class="a" style="left:687px;top:388px;width:20px;height:20px;border-radius:4px;background:#0b0f19;border:1px solid #171d2a;"></div>
<div class="a" style="left:711px;top:388px;width:20px;height:20px;border-radius:4px;background:#0b0f19;border:1px solid #171d2a;"></div>
<svg style="left:687px;top:388px" width="20" height="20" viewBox="0 0 20 20"><path d="M5.6 14.2l0.5-2.4 7.4-7.4 1.9 1.9-7.4 7.4zM6.1 11.8l1.9 1.9" stroke="#d1d5db" stroke-width="0.85" fill="none" stroke-linejoin="round"/></svg>
<svg style="left:711px;top:388px" width="20" height="20" viewBox="0 0 20 20"><path d="M6.5 6.3l7 7.2M13.5 6.3l-7 7.2" stroke="#e5e7eb" stroke-width="1.15" fill="none"/></svg>

<div class="a btn sq" style="left:216px;top:876px;width:165.5px;height:42px;background:#2c313d;border-color:#2f3542;"></div>
<div class="a btn sq" style="left:395px;top:876px;width:165.5px;height:42px;"></div>
<div class="a btn sq" style="left:574px;top:876px;width:165.5px;height:42px;"></div>

<!-- ===== right panel ===== -->
<div class="a" style="left:768px;top:337px;width:739px;height:586px;border-radius:8px 8px 0 0;background:#131929;"></div>
<div class="a" style="left:776px;top:345px;width:723px;height:450px;background:#0b0f19;"></div>
<svg style="left:845px;top:345px;overflow:hidden" width="585" height="390" viewBox="0 0 585 390">
<defs>
<linearGradient id="cg1" x1="0" y1="0" x2="1" y2="0"><stop offset="0" stop-color="#e9e1d0"/><stop offset="0.34" stop-color="#f3ecdd"/><stop offset="0.68" stop-color="#faf4e7"/><stop offset="1" stop-color="#fdf8eb"/></linearGradient>
<linearGradient id="cg2" x1="0" y1="0" x2="1" y2="0"><stop offset="0" stop-color="#e7dfcf"/><stop offset="1" stop-color="#eee6d7"/></linearGradient>
<linearGradient id="cgm" x1="0" y1="0" x2="0" y2="1"><stop offset="0" stop-color="#000"/><stop offset="0.3" stop-color="#000"/><stop offset="0.62" stop-color="#777"/><stop offset="1" stop-color="#fff"/></linearGradient>
<mask id="cmk"><rect width="585" height="390" fill="url(#cgm)"/></mask>
<filter id="cbl" x="-20%" y="-20%" width="140%" height="140%"><feGaussianBlur stdDeviation="16"/></filter>
<filter id="cbl2" x="-20%" y="-20%" width="140%" height="140%"><feGaussianBlur stdDeviation="9"/></filter>
<filter id="cn" x="0" y="0" width="100%" height="100%"><feTurbulence type="fractalNoise" baseFrequency="0.6" numOctaves="2" seed="5"/><feColorMatrix type="matrix" values="0 0 0 0 0.45  0 0 0 0 0.42  0 0 0 0 0.36  0.8 0.8 0.8 0 -1.05"/></filter>
</defs>
<rect width="585" height="390" fill="url(#cg1)"/>
<rect width="585" height="390" fill="url(#cg2)" mask="url(#cmk)"/>
<rect width="585" height="390" filter="url(#cn)" opacity="0.15"/>
<path d="M326.9 209.8V194.2H336.4V209.8 M336.9 210.1V194.1H346.9V210.1 M341.9 194.1v-4.0 M348.4 210.5V201.7H361.2V210.5 M354.8 201.7v-2.4 M363.7 210.9V202.9H375.5V210.9 M379.0 211.4V194.9H390.5V211.4 M384.7 194.9v-2.1 M391.4 211.7V201.6H397.1V211.7 M394.2 201.6v-2.1 M397.6 211.9V192.1H407.0V211.9 M408.6 212.3V195.1H418.5V212.3 M413.5 195.1v-3.1 M422.2 212.7V192.9H436.9V212.7 M436.5 213.1V201.5H443.9V213.1 M440.2 201.5v-5.1 M444.0 213.3V200.3H457.3V213.3 M460.1 213.8V203.3H465.3V213.8 M465.8 214.0V200.7H480.4V214.0 M473.1 200.7v-4.5 M482.8 214.5V205.8H490.5V214.5 M486.6 205.8v-5.9 M492.8 214.8V203.8H499.1V214.8 M495.9 203.8v-2.2 M501.5 215.1V199.4H508.4V215.1 M505.0 199.4v-2.8 M510.5 215.3V198.5H516.9V215.3 M513.7 198.5v-3.7 M516.0 215.5V193.8H523.7V215.5 M523.3 215.7V205.2H536.9V215.7 M530.1 205.2v-5.4 M538.5 216.2V194.2H544.6V216.2 M541.6 194.2v-3.0 M547.0 216.4V204.7H555.3V216.4 M551.1 204.7v-2.4 M556.5 216.7V200.5H564.0V216.7 M560.3 200.5v-3.8 M567.5 217.0V201.2H577.3V217.0 M576.1 217.3V196.5H582.8V217.3 M582.0 217.5V199.2H589.0V217.5" stroke="#a19f98" stroke-width="0.55" fill="none" opacity="0.36"/>
<path d="M572.1 224.7l4.4 -0.3 M355.3 207.3l5.9 -1.0 M509.2 213.7l5.3 0.4 M403.9 210.4l4.9 -1.7 M387.2 216.0l5.4 0.5 M400.5 221.8l2.8 -1.9 M397.7 214.4l2.2 -1.3 M423.2 216.9l2.5 -0.6 M556.9 225.9l4.6 0.8 M478.4 211.3l2.1 -1.9 M561.9 221.7l5.9 -1.9 M491.7 216.9l4.9 -0.7 M584.7 212.4l4.2 0.9 M559.3 222.2l4.8 1.2 M563.1 216.3l4.7 1.6 M551.9 217.1l5.2 1.5 M475.4 218.8l3.5 0.3 M484.7 210.5l4.6 2.0 M554.1 221.9l3.6 0.9 M477.5 216.0l5.4 -1.7 M520.9 210.5l4.4 -0.1 M387.7 218.2l4.0 0.5 M564.5 214.8l2.0 -0.8 M502.4 212.8l2.7 1.6 M497.8 216.4l5.6 -0.7 M499.3 212.6l3.7 1.2 M562.9 224.5l3.5 0.3 M409.8 209.9l4.0 1.3 M546.1 221.5l5.8 -0.9 M372.0 214.0l3.1 -1.1 M434.8 218.0l4.0 -0.7 M543.7 225.7l3.8 -1.7 M336.8 219.8l2.2 0.8 M474.9 213.9l5.2 -1.9 M363.5 213.9l2.1 1.3 M389.5 209.6l2.2 0.5 M443.1 218.2l4.6 1.2 M574.2 221.7l2.8 -0.1 M374.5 207.2l3.9 0.9 M374.6 211.3l3.4 0.8 M462.0 218.3l5.0 -0.4 M531.6 224.2l2.3 1.7 M513.8 211.9l3.8 0.5 M561.8 216.7l4.3 1.5 M532.8 224.9l3.9 0.6 M381.2 218.4l5.3 0.6 M512.5 213.1l5.6 1.9 M579.1 219.5l5.2 -0.7 M561.8 224.1l3.4 -1.7 M441.6 216.9l5.1 -0.1 M336.0 218.8l2.3 1.2 M373.0 212.2l5.2 -1.4 M366.8 214.9l4.9 1.4 M505.3 224.3l4.0 1.8 M350.7 210.0l4.1 -0.8 M515.4 219.8l4.1 1.4 M472.2 213.9l3.5 1.4 M559.4 214.0l5.4 1.9 M463.0 217.7l2.8 0.1 M457.6 218.1l2.1 1.9 M460.9 215.0l5.2 0.3 M454.5 219.4l2.3 0.2 M434.7 223.1l5.7 -0.9 M449.9 210.6l3.7 1.3 M559.4 218.2l3.3 -1.2 M487.0 223.7l2.5 1.1 M334.5 209.3l2.9 0.7 M411.2 213.3l4.5 -1.6 M515.9 211.8l4.0 -1.0 M379.4 215.4l3.7 -0.5 M434.6 216.5l2.6 -1.2 M490.4 219.3l4.1 1.4 M485.4 222.6l2.9 1.0 M536.3 224.3l3.3 -0.7 M565.1 214.3l6.0 1.6 M363.0 210.6l4.9 -1.0 M353.6 219.5l3.7 1.2 M361.0 213.0l4.7 -1.9 M380.2 217.8l5.6 1.9 M358.3 214.6l5.0 0.0 M504.4 212.6l2.3 -1.6 M338.3 214.9l4.1 0.3 M366.2 209.8l2.8 1.4 M582.4 225.6l2.4 -1.8 M572.5 218.2l5.1 -0.7 M448.3 216.5l3.7 0.4 M332.1 217.1l5.4 -1.3 M445.0 219.9l3.6 -1.2 M371.0 214.9l2.1 1.6 M534.1 221.2l5.4 0.5 M432.3 217.5l4.0 1.9 M534.9 214.3l5.6 1.0 M528.0 222.8l3.6 1.6 M554.1 221.4l5.1 1.1 M432.6 219.4l2.3 -0.6 M448.8 208.7l3.4 0.6 M488.6 213.0l5.8 0.7 M415.2 218.1l4.3 0.1 M428.5 223.6l4.6 0.8 M523.8 225.2l2.1 0.5 M518.0 213.9l3.6 -1.8 M378.8 213.0l2.4 -1.0 M560.7 219.3l4.0 1.9 M474.2 224.5l4.6 1.2 M348.2 215.8l5.0 -1.8 M567.0 213.4l3.9 -1.3 M455.6 218.2l2.2 1.8 M436.5 216.5l4.4 -0.5 M401.9 217.8l4.2 -0.9 M512.3 214.4l2.1 -1.0 M339.7 208.8l5.0 -0.4 M558.6 222.3l2.2 2.0 M570.6 212.1l5.6 -0.3 M451.1 223.7l3.0 0.1 M568.8 222.2l3.9 1.9 M537.9 219.7l2.5 0.5 M445.4 211.6l2.2 0.1 M360.6 213.7l4.7 -0.2 M395.9 216.5l3.7 1.1 M464.7 224.3l5.8 0.9 M389.8 209.1l5.6 1.1 M488.8 214.9l3.1 0.7 M473.4 218.2l4.5 1.0 M377.3 211.0l5.9 1.7 M553.8 211.3l2.2 -0.9 M437.6 218.0l2.4 0.2 M347.3 207.9l4.7 0.2 M490.4 215.2l3.9 -1.2 M416.7 219.5l5.4 -1.7 M359.4 219.3l4.5 1.1 M383.3 213.8l3.0 1.2 M423.2 218.2l6.0 -0.7 M469.2 220.5l5.7 -0.3 M423.3 209.6l5.5 -1.7 M350.0 215.3l3.9 0.7 M405.3 219.7l2.3 -1.1 M498.3 210.8l3.2 0.9 M506.5 214.1l2.6 -0.6 M514.7 215.6l2.5 0.8 M474.5 223.3l5.8 1.7 M440.9 220.8l3.2 -0.7 M431.1 222.7l5.6 -1.0 M421.4 213.7l3.5 -0.4 M428.0 211.2l4.3 1.2 M467.2 221.9l4.3 -1.3 M523.1 223.7l3.1 -1.9 M460.8 217.2l4.3 1.9 M495.5 221.9l2.3 0.2 M530.6 211.5l2.3 0.9 M559.0 212.1l4.5 -1.4 M519.8 220.0l3.0 -1.1 M524.8 218.2l5.1 -0.4 M415.2 222.9l4.7 -0.0 M466.4 220.1l4.8 1.7 M433.9 221.1l4.7 1.4 M535.2 223.2l5.6 1.8 M492.7 217.6l4.8 1.2 M436.7 214.8l2.6 1.0 M582.6 217.1l2.7 -1.2 M437.6 212.9l5.9 -1.8 M407.7 209.5l4.6 1.1 M374.7 208.0l3.8 0.3 M561.6 211.4l2.4 -1.3 M384.4 210.9l4.9 0.4 M386.1 210.2l3.1 -1.3 M522.8 214.9l4.2 1.3 M451.5 212.6l5.5 1.7 M416.3 216.4l5.8 -0.1 M385.3 208.1l5.8 1.2 M427.3 216.3l4.1 -0.9 M582.4 221.4l3.0 -2.0 M449.8 214.3l5.2 0.9 M484.0 211.7l2.6 -0.7 M395.2 220.9l4.1 0.5 M583.1 215.4l4.1 -1.4 M526.1 210.1l5.3 1.4 M539.3 211.6l3.1 0.9 M353.6 214.1l3.9 1.8 M479.0 222.4l3.2 1.2 M435.5 222.5l2.4 1.3 M382.1 215.6l4.1 -1.4 M541.8 215.2l3.2 -1.7 M407.0 215.0l4.9 -0.6 M504.7 211.3l3.6 -0.2 M576.4 224.0l4.6 -2.0 M425.3 219.1l2.9 0.3 M446.1 208.7l6.0 1.2 M381.7 216.8l3.2 -0.5 M467.0 213.5l3.3 -0.4 M499.5 213.5l2.8 0.9 M413.1 222.5l4.3 0.9 M413.7 220.7l2.4 -1.4 M352.9 217.1l4.8 -1.3 M431.8 221.2l4.4 -1.6 M386.7 209.8l2.5 -0.4 M347.3 220.8l3.7 0.0 M494.5 221.3l5.3 -0.5 M413.6 214.2l2.1 -0.4 M508.0 224.9l5.2 0.6 M484.6 209.6l3.3 -0.6 M495.4 211.1l3.5 0.0 M530.7 223.0l4.4 -1.4 M525.1 224.1l4.2 -0.6 M456.9 210.9l4.9 1.9 M460.9 219.9l5.3 -1.2 M570.8 220.7l2.8 -1.7 M391.4 216.3l4.8 -0.7 M566.7 216.5l3.9 -1.5 M578.1 213.2l5.6 0.2 M472.3 217.7l3.1 1.6 M582.9 223.9l4.4 -1.5 M540.0 214.9l5.6 -1.0 M475.6 222.0l2.7 0.2 M348.2 207.0l2.7 1.9 M569.4 221.2l3.2 0.7 M517.7 215.8l4.4 1.2 M332.9 209.3l3.9 -1.4 M427.7 217.0l2.7 0.1 M396.2 216.3l3.3 0.6 M338.4 216.7l2.6 1.8" stroke="#8f8d87" stroke-width="0.6" fill="none" opacity="0.4"/>
<path d="M328.7 211.7L584.9 200.6L584.9 225.3L328.7 217.2z" fill="#b9b6ae" opacity="0.22"/>
<path d="M546.2 142.4L546.9 217.2M544.2 147.4h5" stroke="#8a8882" stroke-width="1.1" fill="none" opacity="0.7"/>
<path d="M546.2 145.4Q565.5 164.3 584.9 163.3M546.2 150.4Q565.5 175.3 584.9 173.3" stroke="#a5a39c" stroke-width="0.5" fill="none" opacity="0.5"/>
<path d="M304.7 323.3Q444.8 261.4 463.2 228.2 M474.3 273.2Q500.1 246.7 498.3 231.9 M337.9 261.4Q400.6 246.7 408.0 231.9 M290.0 276.2Q312.1 270.6 334.2 261.4 M433.8 222.7Q463.2 228.2 466.9 231.9" stroke="#a09e97" stroke-width="0.55" fill="none" opacity="0.42" stroke-dasharray="14 3 8 4"/>
<g transform="translate(0,55) scale(0.32499)">
<path d="M139 781l269 -62 M322 782l196 -45 M27 813l242 -56 M137 824l293 -67 M438 763l333 -77 M95 791l388 -89 M282 794l341 -78 M52 805l322 -74 M171 731l388 -89 M256 793l391 -90 M377 807l275 -63 M420 760l405 -93 M459 726l213 -49 M128 822l285 -65 M333 750l302 -69 M213 760l320 -74 M312 808l344 -79 M484 797l418 -96 M356 736l387 -89 M502 801l317 -73 M377 740l380 -87 M307 750l195 -45 M447 811l201 -46 M420 757l216 -50 M167 801l389 -90 M42 792l191 -44 M379 751l391 -90 M510 763l420 -97 M175 735l324 -75 M36 752l278 -64 M325 737l190 -44 M454 747l410 -94 M468 752l290 -67 M280 785l323 -74 M300 782l406 -93 M274 765l353 -81 M139 758l415 -95 M281 776l183 -42 M228 781l185 -43 M328 782l194 -45 M334 766l343 -79 M196 794l357 -82 M31 740l342 -79 M502 739l290 -67 M316 753l267 -61 M176 763l323 -74" stroke="#8b8982" stroke-width="1.6" opacity="0.28" fill="none" stroke-linecap="round" stroke-linejoin="round" />
<path d="M270 738l221 -55 M133 763l215 -54 M275 730l227 -57 M239 732l164 -41 M469 701l145 -36 M287 758l165 -41 M548 694l147 -37 M445 741l167 -42 M233 730l180 -45 M215 765l233 -58 M212 740l227 -57 M441 738l149 -37 M185 744l225 -56 M256 738l161 -40 M330 732l247 -62 M198 728l250 -63 M560 732l164 -41 M595 725l128 -32 M493 733l203 -51 M380 720l148 -37 M234 727l190 -48 M264 759l98 -24 M572 717l247 -62 M568 727l188 -47 M127 773l119 -30 M270 751l179 -45 M327 758l194 -49 M291 729l236 -59 M359 747l150 -37 M219 751l229 -57" stroke="#807e78" stroke-width="1.8" opacity="0.3" fill="none" stroke-linecap="round" stroke-linejoin="round" />
<path d="M701 759l152 -50 M853 703l61 -20 M811 721l65 -21 M725 724l113 -37 M762 720l138 -45 M660 738l73 -24 M690 727l157 -52 M865 661l110 -36 M736 722l95 -31 M815 705l96 -32 M706 734l72 -24 M793 720l98 -32 M679 737l97 -32 M805 719l98 -32 M852 693l103 -34 M749 726l130 -43 M761 731l106 -35 M719 739l130 -43 M677 750l103 -34 M871 702l97 -32 M875 693l86 -28 M771 699l141 -47 M819 719l139 -46 M820 711l116 -38 M685 755l60 -20 M694 761l64 -21 M682 732l148 -49 M703 720l144 -48" stroke="#85837d" stroke-width="1.6" opacity="0.3" fill="none" stroke-linecap="round" stroke-linejoin="round" />
<path d="M940 828Q1060 770 1200 690M1090 610Q1150 585 1200 575M1000 640l60 -22M20 900Q350 860 700 770M300 880Q520 830 640 790" stroke="#85837d" stroke-width="1.6" opacity="0.4" fill="none" stroke-linecap="round" stroke-linejoin="round" />
<path d="M20 790L150 715 480 760 700 730 930 650 1010 610 1000 650 880 720 640 815 330 840 100 835z" fill="#8f8c84" opacity="0.36" filter="url(#cbl)"/>
<path d="M150 700L300 735 500 765 560 800 300 790 170 745z" fill="#77746d" opacity="0.35" filter="url(#cbl2)"/>
<path d="M425 272Q520 238 640 226T860 236Q905 262 930 320T1005 470L1025 550 1005 560 1000 600 905 625 690 682 660 700 500 730 300 705 120 655 115 618 138 600 140 520 170 480 330 428z" fill="#f2ecdf" opacity="0.92"/>
<path d="M425 272Q520 238 640 226T860 236Q905 262 930 320T990 415Q1008 450 1018 490" stroke="#85837d" stroke-width="2.4" opacity="0.85" fill="none" stroke-linecap="round" stroke-linejoin="round" />
<path d="M440 262Q560 222 690 220T880 250" stroke="#85837d" stroke-width="1.6" opacity="0.5" fill="none" stroke-linecap="round" stroke-linejoin="round" />
<path d="M815 222L862 102" stroke="#85837d" stroke-width="2.0" opacity="0.8" fill="none" stroke-linecap="round" stroke-linejoin="round" />
<path d="M425 272L352 412Q470 408 610 436Q640 440 648 425L682 290Q670 262 640 262Q520 262 425 272z" stroke="#85837d" stroke-width="2.4" opacity="0.85" fill="none" stroke-linecap="round" stroke-linejoin="round" />
<path d="M440 290L650 292Q640 360 618 420Q500 400 380 405z" stroke="#85837d" stroke-width="1.8" opacity="0.75" fill="none" stroke-linecap="round" stroke-linejoin="round" />
<path d="M450 270l190 -12M445 278l200 -10M470 262l170 -8" stroke="#85837d" stroke-width="1.3" opacity="0.4" fill="none" stroke-linecap="round" stroke-linejoin="round" />
<path d="M478 400Q500 360 545 358M490 402Q510 372 540 372M555 292L540 410M585 292L560 415M600 345L640 300M600 380L632 375" stroke="#85837d" stroke-width="1.8" opacity="0.7" fill="none" stroke-linecap="round" stroke-linejoin="round" />
<path d="M560 300l20 100M566 300l20 105M572 300l20 108M578 298l22 112M584 298l22 116M590 298l20 118" stroke="#85837d" stroke-width="1.2" opacity="0.4" fill="none" stroke-linecap="round" stroke-linejoin="round" />
<path d="M352 412Q340 420 335 428Q280 440 170 480M335 428Q290 452 215 505M345 425Q470 420 575 455M600 440Q575 462 470 490T375 548M575 455l5 10" stroke="#85837d" stroke-width="2.4" opacity="0.85" fill="none" stroke-linecap="round" stroke-linejoin="round" />
<path d="M568 468l8 -28 8 28z" stroke="#85837d" stroke-width="1.6" opacity="0.8" fill="none" stroke-linecap="round" stroke-linejoin="round" />
<path d="M170 480Q140 500 140 545L135 600M215 505Q190 540 185 590Q250 625 340 632Q360 600 365 560" stroke="#85837d" stroke-width="2.4" opacity="0.85" fill="none" stroke-linecap="round" stroke-linejoin="round" />
<ellipse cx="162" cy="515" rx="22" ry="30" fill="#f3eee3" stroke="#7d7b75" stroke-width="2.6" opacity="0.9"/>
<path d="M150 515a12 18 0 1 0 24 0a12 18 0 1 0 -24 0" stroke="#85837d" stroke-width="1.4" opacity="0.5" fill="none" stroke-linecap="round" stroke-linejoin="round" />
<ellipse cx="447" cy="548" rx="31" ry="37" fill="#f3eee3" stroke="#7d7b75" stroke-width="2.8" opacity="0.9"/>
<path d="M428 548a20 26 0 1 0 40 0a20 26 0 1 0 -40 0" stroke="#85837d" stroke-width="1.4" opacity="0.5" fill="none" stroke-linecap="round" stroke-linejoin="round" />
<path d="M215 510Q245 508 270 520L252 606Q220 600 196 584zM290 522Q330 525 360 548L340 622Q300 616 266 606z" fill="#8b8982" opacity="0.35"/>
<path d="M215 510Q245 508 270 520L252 606Q220 600 196 584zM290 522Q330 525 360 548L340 622Q300 616 266 606z" stroke="#75736d" stroke-width="2.6" opacity="0.9" fill="none" stroke-linecap="round" stroke-linejoin="round" />
<path d="M217 512L203 586 M223 513L209 588 M229 514L215 590 M236 514L222 592 M242 515L228 594 M248 516L234 596 M254 517L240 598 M260 518L246 600 M267 518L253 602 M273 519L259 604 M292 524L272 606 M298 526L278 607 M304 528L284 609 M311 530L291 610 M317 532L297 612 M323 534L303 613 M329 536L309 614 M335 538L315 616 M342 540L322 617 M348 542L328 619 M354 544L334 620 M360 546L340 621" stroke="#6f6d67" stroke-width="2.2" opacity="0.85" fill="none" stroke-linecap="round" stroke-linejoin="round" />
<path d="M283 490Q295 484 305 492Q298 502 285 500z" stroke="#85837d" stroke-width="1.8" opacity="0.8" fill="none" stroke-linecap="round" stroke-linejoin="round" />
<path d="M408 634a12 13 0 1 0 24 0a12 13 0 1 0 -24 0M368 658a11 13 0 1 0 22 0a11 13 0 1 0 -22 0" stroke="#85837d" stroke-width="2" opacity="0.8" fill="none" stroke-linecap="round" stroke-linejoin="round" />
<path d="M185 622l20 6 8 -4 12 8 14 -2 16 8 18 0 20 8 20 -2 30 8" stroke="#85837d" stroke-width="1.6" opacity="0.55" fill="none" stroke-linecap="round" stroke-linejoin="round" />
<path d="M165 688Q180 732 230 744Q275 746 300 728L300 705 165 672z" fill="#bdb9af" stroke="#75736d" stroke-width="2.2" opacity="0.85"/>
<path d="M140 600L118 612" stroke="#85837d" stroke-width="2.2" opacity="0.8" fill="none" stroke-linecap="round" stroke-linejoin="round" />
<path d="M118 612Q112 640 124 655Q210 690 300 704T480 728Q510 722 512 700Q505 684 480 684Q380 676 300 660T140 604Q125 604 118 612z" fill="#f0eade" stroke="#75736d" stroke-width="2.6" opacity="0.95"/>
<path d="M150 600L150 688 162 690 162 604zM290 650L288 728 304 730 304 652z" stroke="#85837d" stroke-width="2.4" opacity="0.9" fill="none" stroke-linecap="round" stroke-linejoin="round" />
<path d="M166 642L288 668 288 712 166 686z" fill="#ece6da" stroke="#75736d" stroke-width="2.4" opacity="0.95"/>
<text x="174" y="684" font-family="Liberation Sans,sans-serif" font-size="32" font-weight="700" fill="#6f6d67" opacity="0.8" transform="rotate(12 172 684)" textLength="108" lengthAdjust="spacingAndGlyphs">WA V IG</text>
<path d="M462 672Q470 610 520 565Q585 520 640 565Q675 600 688 682M495 640Q505 600 540 578Q590 552 630 590Q655 620 668 670" stroke="#85837d" stroke-width="2.4" opacity="0.85" fill="none" stroke-linecap="round" stroke-linejoin="round" />
<path d="M520 596l8 22 M529 594l8 22 M538 593l8 22 M547 592l8 22 M556 590l8 22 M565 588l8 22 M574 587l8 22 M583 586l8 22 M592 588l8 22 M601 590l8 22 M610 593l8 22 M619 596l8 22 M628 598l8 22 M637 600l8 22 M646 603l8 22 M655 606l8 22" stroke="#85837d" stroke-width="1.4" opacity="0.45" fill="none" stroke-linecap="round" stroke-linejoin="round" />
<ellipse cx="578" cy="690" rx="84" ry="97" fill="#d8d3c8" stroke="#75736d" stroke-width="3" opacity="0.95" transform="rotate(8 578 690)"/>
<ellipse cx="580" cy="690" rx="56" ry="70" fill="#ece6da" stroke="#75736d" stroke-width="2.4" opacity="0.95" transform="rotate(8 580 690)"/>
<ellipse cx="580" cy="690" rx="40" ry="52" fill="#dcd7cc" stroke="#75736d" stroke-width="2" opacity="0.9" transform="rotate(8 580 690)"/>
<ellipse cx="580" cy="690" rx="16" ry="21" fill="#ece6da" stroke="#75736d" stroke-width="2" opacity="0.95" transform="rotate(8 580 690)"/>
<ellipse cx="565" cy="655" rx="6" ry="8" fill="#6f6d67" opacity="0.7"/>
<ellipse cx="600" cy="662" rx="6" ry="8" fill="#6f6d67" opacity="0.7"/>
<ellipse cx="608" cy="705" rx="6" ry="8" fill="#6f6d67" opacity="0.7"/>
<ellipse cx="585" cy="732" rx="6" ry="8" fill="#6f6d67" opacity="0.7"/>
<ellipse cx="556" cy="712" rx="6" ry="8" fill="#6f6d67" opacity="0.7"/>
<path d="M500 740Q540 790 600 782M505 750Q545 798 610 778" stroke="#85837d" stroke-width="1.6" opacity="0.5" fill="none" stroke-linecap="round" stroke-linejoin="round" />
<path d="M905 600Q905 530 945 495Q985 470 1010 500Q1025 530 1025 552M925 560Q930 520 958 500Q990 490 1005 520" stroke="#85837d" stroke-width="2.4" opacity="0.85" fill="none" stroke-linecap="round" stroke-linejoin="round" />
<ellipse cx="950" cy="585" rx="52" ry="78" fill="#d8d3c8" stroke="#75736d" stroke-width="3" opacity="0.95" transform="rotate(8 950 585)"/>
<ellipse cx="954" cy="584" rx="34" ry="56" fill="#ece6da" stroke="#75736d" stroke-width="2.2" opacity="0.95" transform="rotate(8 954 584)"/>
<ellipse cx="956" cy="584" rx="22" ry="38" fill="#dcd7cc" stroke="#75736d" stroke-width="1.8" opacity="0.9" transform="rotate(8 956 584)"/>
<ellipse cx="957" cy="584" rx="8" ry="14" fill="#ece6da" stroke="#75736d" stroke-width="1.8" opacity="0.95" transform="rotate(8 957 584)"/>
<path d="M1018 522L1046 524 1048 548 1022 556M1010 540l12 16" stroke="#85837d" stroke-width="2.4" opacity="0.85" fill="none" stroke-linecap="round" stroke-linejoin="round" />
<path d="M688 682L905 622M684 660L902 600M690 655Q685 640 682 610" stroke="#85837d" stroke-width="2.4" opacity="0.85" fill="none" stroke-linecap="round" stroke-linejoin="round" />
<path d="M682 290L648 440Q660 540 690 655L790 625Q790 530 772 436L745 290M772 436L900 424Q910 500 905 588L790 625M648 445L900 424" stroke="#85837d" stroke-width="2.2" opacity="0.8" fill="none" stroke-linecap="round" stroke-linejoin="round" />
<path d="M655 450Q640 520 680 650" stroke="#85837d" stroke-width="1.6" opacity="0.5" fill="none" stroke-linecap="round" stroke-linejoin="round" />
<path d="M692 300L740 292 752 428 660 440Q668 360 692 300zM760 286L856 280Q876 340 880 402L770 420zM880 300Q900 300 906 318L910 398 890 394z" stroke="#85837d" stroke-width="2.2" opacity="0.8" fill="none" stroke-linecap="round" stroke-linejoin="round" />
<path d="M772 418l26 -40 M779 417l26 -40 M786 416l26 -40 M793 415l26 -40 M800 414l26 -40 M807 413l26 -40 M814 412l26 -40 M821 411l26 -40 M828 410l26 -40 M835 409l26 -40 M842 408l26 -40 M849 407l26 -40 M856 406l26 -40 M863 405l26 -40" stroke="#85837d" stroke-width="1.3" opacity="0.45" fill="none" stroke-linecap="round" stroke-linejoin="round" />
<path d="M884 305l2 85 M888 308l2 85 M892 311l2 85 M896 314l2 85 M900 317l2 85 M904 320l2 85" stroke="#85837d" stroke-width="1.3" opacity="0.5" fill="none" stroke-linecap="round" stroke-linejoin="round" />
<path d="M768 372L878 366" stroke="#85837d" stroke-width="1.6" opacity="0.6" fill="none" stroke-linecap="round" stroke-linejoin="round" />
<path d="M421 281L436 262Q490 249 560 246T652 244Q680 250 685 272L676 302Q672 288 652 286L436 286z" fill="#8b8982" fill-opacity="0.32" stroke="#7d7b75" stroke-width="2" opacity="0.9"/>
<path d="M555 292L602 292 586 416 545 408z" fill="#8b8982" opacity="0.3"/>
<path d="M602 345L646 298 620 420 588 416z" fill="#8b8982" opacity="0.16"/>
<path d="M880 300Q900 300 906 318L910 398 890 394z" fill="#6f6d67" opacity="0.45"/>
<path d="M769 388L878 372 880 402 770 420z" fill="#8b8982" opacity="0.28"/>
<path d="M495 645Q505 600 540 578Q590 552 630 590Q655 620 668 672L652 650Q610 570 545 598Q510 620 503 668z" fill="#6f6d67" opacity="0.45"/>
<path d="M925 562Q930 520 958 500Q990 490 1005 520L1018 552 1002 548Q985 508 960 516Q940 530 936 568z" fill="#6f6d67" opacity="0.45"/>
<ellipse cx="335" cy="391" rx="17" ry="25" fill="#efe9dd" stroke="#7d7b75" stroke-width="2.6" opacity="0.9" transform="rotate(12 335 391)"/>
<path d="M348 410l12 8" stroke="#85837d" stroke-width="2" opacity="0.8" fill="none" stroke-linecap="round" stroke-linejoin="round" />
<path d="M660 420Q656 388 690 386Q722 388 722 416Q716 436 690 436Q664 438 660 420z" fill="#efe9dd" stroke="#7d7b75" stroke-width="2.6" opacity="0.9"/>
<path d="M760 468L804 461M764 472l6 -2M876 438L906 432" stroke="#85837d" stroke-width="2.8" opacity="0.9" fill="none" stroke-linecap="round" stroke-linejoin="round" />
<path d="M910 388Q945 380 972 376M908 402Q950 392 985 392" stroke="#85837d" stroke-width="1.8" opacity="0.7" fill="none" stroke-linecap="round" stroke-linejoin="round" />
</g>
</svg>
<div class="a" style="left:1471px;top:353px;width:20px;height:20px;border-radius:4px;background:#0b0f19;border:1px solid #4b5563;"></div>
<svg style="left:1471px;top:353px" width="20" height="20" viewBox="0 0 20 20"><path d="M6.5 6.2l7 7.2M13.5 6.2l-7 7.2" stroke="#e5e7eb" stroke-width="1.15" fill="none"/></svg>
<!-- thumbnail -->
<div class="a" style="left:1118px;top:747px;width:40px;height:40px;border-radius:9px;background:#f47b2a;"></div>
<div class="a" style="left:1121px;top:750px;width:34px;height:34px;border-radius:6px;background:#111827;overflow:hidden;"><svg style="left:0;top:5.4px;overflow:hidden" width="34" height="22.7" viewBox="0 0 585 390" preserveAspectRatio="none">
<rect width="585" height="390" fill="url(#cg1)"/><rect width="585" height="390" fill="url(#cg2)" mask="url(#cmk)"/>
<g transform="translate(0,55) scale(0.32499)" opacity="0.8"><path d="M425 272Q520 238 640 226T860 236Q905 262 930 320T1005 470L1025 550 1000 600 905 625 690 682 500 730 300 705 120 655 115 618 140 520 170 480 330 428z" fill="none" stroke="#8d8b85" stroke-width="14"/><ellipse cx="578" cy="690" rx="80" ry="95" fill="none" stroke="#8d8b85" stroke-width="14"/><ellipse cx="950" cy="585" rx="50" ry="76" fill="none" stroke="#8d8b85" stroke-width="12"/><path d="M440 290L650 292 618 420 380 405zM692 300L740 292 752 428 660 440zM760 286L856 280 880 402 770 420z" fill="none" stroke="#8d8b85" stroke-width="9"/></g>
<path d="M300 172L585 190" stroke="#aaa8a0" stroke-width="8" opacity="0.5"/>
</svg></div>

<div class="a btn" style="left:776px;top:811px;width:107px;height:66px;"></div>
<div class="a btn" style="left:899px;top:811px;width:107px;height:66px;"></div>
<div class="a btn" style="left:1022px;top:811px;width:108px;height:66px;"></div>
<div class="a btn" style="left:1146px;top:811px;width:107px;height:66px;"></div>
<div class="a btn" style="left:1269px;top:811px;width:107px;height:66px;"></div>
<div class="a btn" style="left:1392px;top:811px;width:107px;height:66px;"></div>
<svg style="left:820px;top:837.5px" width="19" height="14" viewBox="0 0 19 14"><path d="M0.9 12.8V1.7L1.7 0.9H5.5L6.4 2H14.1L14.8 2.7V12.8z" fill="#e9a822"/><path d="M1.4 1.4h4.1l0.7 1.3H1.4z" fill="#dc1f2b"/><path d="M4.3 4.6L17.5 3.3 14.6 12.8H1z" fill="#fbd67a"/><path d="M0.9 12.8V1.7L1.7 0.9H5.5L6.4 2H14.1L14.8 2.7V3.5L17.5 3.3 14.6 12.8z" fill="none" stroke="#0c0a08" stroke-width="1.1" stroke-linejoin="round"/></svg>


<div class="tx">
<span class="t" style="left:16.0px;top:14.5px;font-size:13px;letter-spacing:0.124px;color:#d1d5db;">Stable Diffusion checkpoint</span>
<span class="t" style="left:33.0px;top:45.5px;font-size:13px;letter-spacing:0.071px;color:#f3f4f6;">deliberate_v2.safetensors [9aba26abdf]</span>
<span class="t" style="left:415.5px;top:26.5px;font-size:13px;letter-spacing:-0.016px;color:#d1d5db;">Clip skip</span>
<span class="t" style="left:698.6px;top:29.5px;font-size:13px;color:#f3f4f6;">1</span>
<span class="t" style="left:765.7px;top:14.7px;font-size:12.5px;letter-spacing:-0.924px;color:#d1d5db;">SD VAE</span>
<span class="t" style="left:782.3px;top:45.5px;font-size:13px;letter-spacing:0.011px;color:#f3f4f6;">vae-ft-mse-840000-ema-pruned.safetensors</span>
<span class="t" style="left:33.0px;top:99.8px;font-size:15px;letter-spacing:0.323px;color:#9ca3af;">txt2img</span>
<span class="t" style="left:117.3px;top:99.8px;font-size:15px;letter-spacing:0.369px;color:#ffffff;">img2img</span>
<span class="t" style="left:210.5px;top:99.8px;font-size:15px;letter-spacing:-0.643px;color:#9ca3af;">Extras</span>
<span class="t" style="left:284.4px;top:99.8px;font-size:15px;letter-spacing:-0.543px;color:#9ca3af;">PNG Info</span>
<span class="t" style="left:376.7px;top:99.8px;font-size:15px;letter-spacing:-0.052px;color:#9ca3af;">Checkpoint Merger</span>
<span class="t" style="left:537.2px;top:99.8px;font-size:15px;letter-spacing:-0.181px;color:#9ca3af;">Train</span>
<span class="t" style="left:604.7px;top:99.8px;font-size:15px;letter-spacing:0.287px;color:#9ca3af;">Interrogator</span>
<span class="t" style="left:719.6px;top:99.8px;font-size:15px;letter-spacing:-0.058px;color:#9ca3af;">Settings</span>
<span class="t" style="left:808.0px;top:99.8px;font-size:15px;letter-spacing:-0.275px;color:#9ca3af;">Extensions</span>
<span class="t" style="left:938.2px;top:123.5px;font-size:13px;letter-spacing:0.038px;color:#f3f4f6;">39/75</span>
<span class="t" style="left:938.2px;top:223.5px;font-size:13px;letter-spacing:0.038px;color:#f3f4f6;">62/75</span>
<span class="t" style="left:40.3px;top:145.5px;font-size:13px;letter-spacing:0.218px;color:#f3f4f6;">рисунок карандашом,</span>
<span class="t" style="left:178.2px;top:145.5px;font-size:13px;color:#f3f4f6;">a car, line art, bw, drawing on paper, 4k paper texture, sketch, strokes</span>
<span class="t" style="left:40.2px;top:245.5px;font-size:13px;letter-spacing:0.116px;color:#f3f4f6;">3d, doll, realism, photo, realistic, (deformed, distorted, disfigured:1.3), poorly drawn, bad anatomy, wrong anatomy, extra limb, missing limb, floating limbs,</span>
<span class="t" style="left:40.2px;top:265.5px;font-size:13px;letter-spacing:0.141px;color:#f3f4f6;">(mutated hands and fingers:1.4), disconnected limbs, mutation, mutated, ugly, disgusting, blurry, amputation</span>
<span class="t" style="left:1036.7px;top:168.8px;font-size:15px;font-weight:700;-webkit-text-stroke:0;letter-spacing:-0.346px;color:#ffffff;">Interrogate CLIP</span>
<span class="t" style="left:1315.9px;top:161.8px;font-size:15px;font-weight:700;-webkit-text-stroke:0;letter-spacing:-0.421px;color:#ffffff;">Generate</span>
<span class="t" style="left:1053.8px;top:256.8px;font-size:15px;font-weight:700;-webkit-text-stroke:0;letter-spacing:-0.146px;color:#ffffff;">Interrogate</span>
<span class="t" style="left:1053.8px;top:280.8px;font-size:15px;font-weight:700;-webkit-text-stroke:0;letter-spacing:-0.493px;color:#ffffff;">DeepBooru</span>
<span class="t" style="left:1187.0px;top:259.5px;font-size:13px;letter-spacing:-0.181px;color:#d1d5db;">Styles</span>
<span class="t" style="left:46.3px;top:344.8px;font-size:15px;letter-spacing:0.269px;color:#ffffff;">img2img</span>
<span class="t" style="left:139.0px;top:344.8px;font-size:15px;letter-spacing:-0.332px;color:#9ca3af;">Sketch</span>
<span class="t" style="left:218.4px;top:344.8px;font-size:15px;letter-spacing:0.259px;color:#9ca3af;">Inpaint</span>
<span class="t" style="left:299.9px;top:344.8px;font-size:15px;letter-spacing:0.057px;color:#9ca3af;">Inpaint sketch</span>
<span class="t" style="left:428.1px;top:344.8px;font-size:15px;letter-spacing:0.212px;color:#9ca3af;">Inpaint upload</span>
<span class="t" style="left:560.3px;top:344.8px;font-size:15px;letter-spacing:-0.265px;color:#9ca3af;">Batch</span>
<span class="t" style="left:42.0px;top:875.5px;font-size:13px;font-weight:700;-webkit-text-stroke:0;letter-spacing:-0.531px;color:#f3f4f6;">Copy image to:</span>
<span class="t" style="left:268.9px;top:887.8px;font-size:15px;font-weight:700;-webkit-text-stroke:0;letter-spacing:-0.298px;color:#7f848e;">img2img</span>
<span class="t" style="left:455.4px;top:887.8px;font-size:15px;font-weight:700;-webkit-text-stroke:0;letter-spacing:-0.666px;color:#ffffff;">sketch</span>
<span class="t" style="left:632.3px;top:887.8px;font-size:15px;font-weight:700;-webkit-text-stroke:0;letter-spacing:-0.095px;color:#ffffff;">inpaint</span>
<span class="t" style="left:936.8px;top:834.8px;font-size:15px;font-weight:700;-webkit-text-stroke:0;letter-spacing:-0.949px;color:#ffffff;">Save</span>
<span class="t" style="left:1064.9px;top:834.8px;font-size:15px;font-weight:700;-webkit-text-stroke:0;letter-spacing:-0.400px;color:#ffffff;">Zip</span>
<span class="t" style="left:1173.1px;top:822.8px;font-size:15px;font-weight:700;-webkit-text-stroke:0;letter-spacing:-0.467px;color:#ffffff;">Send to</span>
<span class="t" style="left:1168.8px;top:846.8px;font-size:15px;font-weight:700;-webkit-text-stroke:0;letter-spacing:-0.148px;color:#ffffff;">img2img</span>
<span class="t" style="left:1296.4px;top:822.8px;font-size:15px;font-weight:700;-webkit-text-stroke:0;letter-spacing:-0.467px;color:#ffffff;">Send to</span>
<span class="t" style="left:1297.7px;top:846.8px;font-size:15px;font-weight:700;-webkit-text-stroke:0;letter-spacing:-0.012px;color:#ffffff;">inpaint</span>
<span class="t" style="left:1419.5px;top:822.8px;font-size:15px;font-weight:700;-webkit-text-stroke:0;letter-spacing:-0.467px;color:#ffffff;">Send to</span>
<span class="t" style="left:1424.4px;top:846.8px;font-size:15px;font-weight:700;-webkit-text-stroke:0;letter-spacing:-0.461px;color:#ffffff;">extras</span>
<span class="t" style="left:776.3px;top:894.5px;font-size:13px;letter-spacing:0.218px;color:#f3f4f6;">рисунок карандашом,</span>
<span class="t" style="left:914.2px;top:894.5px;font-size:13px;color:#f3f4f6;">a car, line art, bw, drawing on paper, 4k paper texture, sketch, strokes</span>
<span class="t" style="left:776.2px;top:916.5px;font-size:13px;letter-spacing:0.141px;color:#f3f4f6;">Negative prompt: 3d, doll, realism, photo, realistic, (deformed, distorted, disfigured:1.3), poorly drawn, bad</span>
</div>
</body>
</html>
